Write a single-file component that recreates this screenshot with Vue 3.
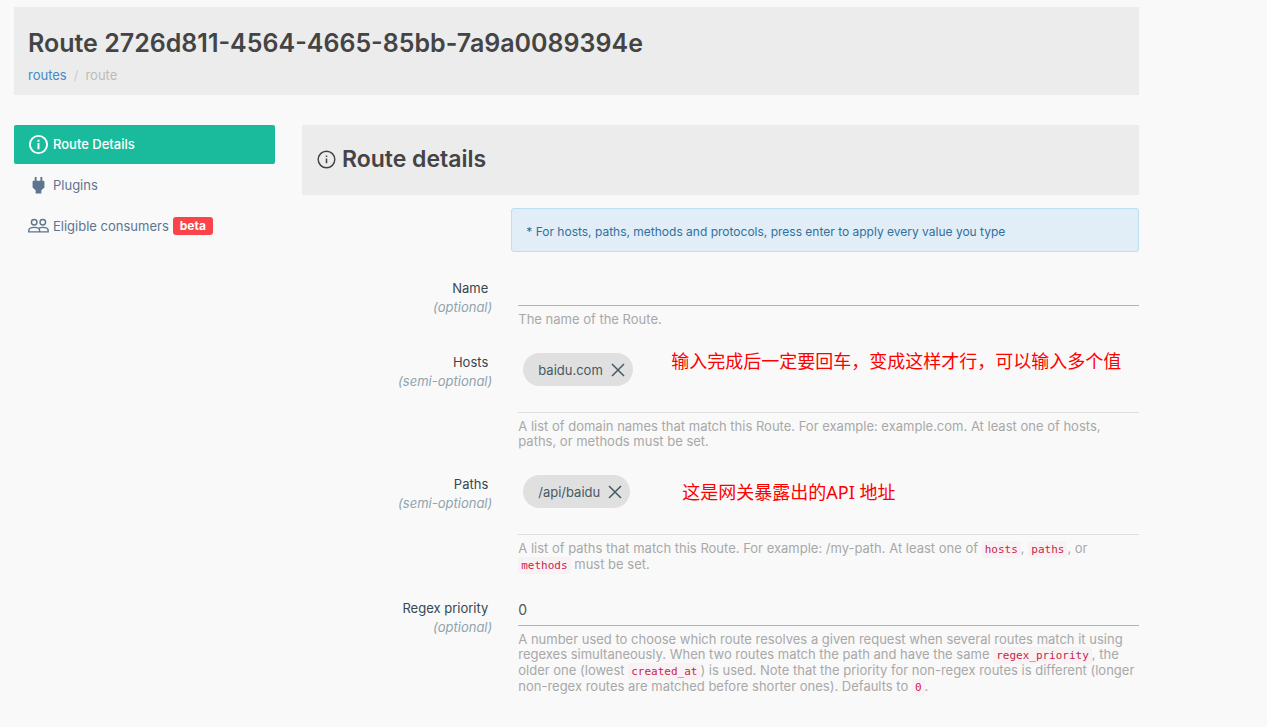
<script setup>
import { ref } from 'vue'

const routeId = '2726d811-4564-4665-85bb-7a9a0089394e'
const name = ref('')
const hosts = ref(['baidu.com'])
const paths = ref(['/api/baidu'])
const hostDraft = ref('')
const pathDraft = ref('')
const regexPriority = ref('0')

function add(list, draft) {
  const value = draft.trim()
  if (value) list.push(value)
}
function addHost() {
  add(hosts.value, hostDraft.value)
  hostDraft.value = ''
}
function addPath() {
  add(paths.value, pathDraft.value)
  pathDraft.value = ''
}
</script>

<template>
  <div class="page">
    <header class="page-header">
      <h1>Route {{ routeId }}</h1>
      <nav class="breadcrumb" aria-label="Breadcrumb">
        <a href="#/routes">routes</a><span class="slash">/</span><span class="current">route</span>
      </nav>
    </header>

    <div class="columns">
      <nav class="side" aria-label="Route sections">
        <a href="#details" class="side-link active">
          <svg class="icon" viewBox="0 0 22 22" aria-hidden="true">
            <circle cx="11" cy="11" r="9" fill="none" stroke="currentColor" stroke-width="2" />
            <path d="M10 9.500h2V16h-2zM10 6h2v2h-2z" fill="currentColor" />
          </svg>
          <span>Route Details</span>
        </a>
        <a href="#plugins" class="side-link">
          <svg class="icon" viewBox="0 0 22 22" aria-hidden="true">
            <path d="M7 2h2v4h4V2h2v4h1.500l.7.700v6.300L14 16v3.500H8V16l-3.200-3V6.700l.7-.7H7z" fill="currentColor" />
          </svg>
          <span>Plugins</span>
        </a>
        <a href="#consumers" class="side-link">
          <svg class="icon" viewBox="0 0 22 22" aria-hidden="true" fill="none" stroke="currentColor" stroke-width="1.500">
            <circle cx="6.500" cy="6.500" r="2.900" />
            <circle cx="15.500" cy="6.500" r="2.900" />
            <path d="M.9 16.600v-1.700c0-2 2.900-3 5.600-3s5.600 1 5.600 3v1.700zM12.100 16.600h9v-1.700c0-2-2.900-3-5.600-3-1.500 0-3 .3-4.100.9" />
          </svg>
          <span>Eligible consumers</span>
          <span class="badge">beta</span>
        </a>
      </nav>

      <main class="content">
        <div class="panel-head">
          <svg class="icon" viewBox="0 0 22 22" aria-hidden="true">
            <circle cx="11" cy="11" r="8.700" fill="none" stroke="currentColor" stroke-width="1.500" />
            <path d="M10.200 10h1.600v5h-1.600zM10.200 6.800h1.600v1.600h-1.600z" fill="currentColor" />
          </svg>
          <h2>Route details</h2>
        </div>

        <p class="alert">* For hosts, paths, methods and protocols, press enter to apply every value you type</p>

        <form @submit.prevent>
          <div class="row">
            <label for="name"><span class="label">Name</span><em>(optional)</em></label>
            <div class="field">
              <input id="name" v-model="name" type="text" class="text-input" />
              <p class="help">The name of the Route.</p>
            </div>
          </div>

          <div class="row">
            <label for="hosts"><span class="label">Hosts</span><em>(semi-optional)</em></label>
            <div class="field">
              <div class="chips">
                <span v-for="(host, i) in hosts" :key="host" class="chip">
                  {{ host }}
                  <button type="button" :aria-label="'Remove ' + host" @click="hosts.splice(i, 1)">
                    <svg viewBox="0 0 14 14" aria-hidden="true"><path d="M1 1l12 12M13 1L1 13" /></svg>
                  </button>
                </span>
                <input id="hosts" v-model="hostDraft" type="text" class="chip-input" @keydown.enter="addHost" />
                <span class="note host-note">输入完成后一定要回车，变成这样才行，可以输入多个值</span>
              </div>
              <p class="help">A list of domain names that match this Route. For example: example.com. At least one of hosts,<br />paths, or methods must be set.</p>
            </div>
          </div>

          <div class="row">
            <label for="paths"><span class="label">Paths</span><em>(semi-optional)</em></label>
            <div class="field">
              <div class="chips">
                <span v-for="(path, i) in paths" :key="path" class="chip">
                  {{ path }}
                  <button type="button" :aria-label="'Remove ' + path" @click="paths.splice(i, 1)">
                    <svg viewBox="0 0 14 14" aria-hidden="true"><path d="M1 1l12 12M13 1L1 13" /></svg>
                  </button>
                </span>
                <input id="paths" v-model="pathDraft" type="text" class="chip-input" @keydown.enter="addPath" />
                <span class="note path-note">这是网关暴露出的API 地址</span>
              </div>
              <p class="help">A list of paths that match this Route. For example: /my-path. At least one of <code>hosts</code>, <code>paths</code>, or<br /><code>methods</code> must be set.</p>
            </div>
          </div>

          <div class="row">
            <label for="regex"><span class="label">Regex priority</span><em>(optional)</em></label>
            <div class="field">
              <input id="regex" v-model="regexPriority" type="text" class="text-input" />
              <p class="help">A number used to choose which route resolves a given request when several routes match it using<br />regexes simultaneously. When two routes match the path and have the same <code>regex_priority</code>, the<br />older one (lowest <code>created_at</code>) is used. Note that the priority for non-regex routes is different (longer<br />non-regex routes are matched before shorter ones). Defaults to <code>0</code>.</p>
            </div>
          </div>

          <div class="row">
            <label for="methods"><span class="label">Methods</span><em>(semi-optional)</em></label>
            <div class="field">
              <div class="chips">
                <input id="methods" type="text" class="chip-input" />
              </div>
            </div>
          </div>
        </form>
      </main>
    </div>
  </div>
</template>

<style>
body {
  background: #f9f9f9;
}
</style>

<style scoped>
* {
  box-sizing: border-box;
}
.page {
  height: 100vh;
  overflow: hidden;
  padding: 7px 128px 0 14px;
  font-family: Inter, "Noto Sans", "Noto Sans CJK SC", sans-serif;
  font-size: 13px;
  color: #444;
}
h1,
h2,
p {
  margin: 0;
}
.page-header {
  padding: 20px 14px 12px;
  background: #ececec;
}
h1 {
  font-size: 25px;
  line-height: 32px;
  font-weight: 600;
}
.breadcrumb {
  margin-top: 8px;
  line-height: 16px;
}
.breadcrumb a {
  color: #428bca;
  text-decoration: none;
}
.slash {
  padding: 0 7px;
  color: #ccc;
}
.current {
  color: #bbb;
}
.columns {
  display: grid;
  grid-template-columns: 261fr 837fr;
  gap: 27px;
  margin-top: 30px;
}
.side {
  display: flex;
  flex-direction: column;
  gap: 2px;
}
.side-link {
  display: flex;
  align-items: center;
  gap: 4px;
  height: 39px;
  padding: 0 14px 1px;
  border-radius: 2px;
  color: #5d7590;
  text-decoration: none;
}
.side-link.active {
  background: #1abb9c;
  color: #fff;
  font-weight: 500;
}
.icon {
  flex: none;
  width: 21px;
  height: 21px;
}
.badge {
  padding: 0 7px;
  border-radius: 3px;
  background: #fb4449;
  color: #fff;
  font-size: 12px;
  line-height: 18px;
  font-weight: 700;
}
.panel-head {
  display: flex;
  align-items: center;
  gap: 5px;
  height: 70px;
  padding: 0 14px 2px;
  background: #ececec;
}
h2 {
  font-size: 23px;
  line-height: 28px;
  font-weight: 600;
}
.alert {
  margin: 13px 0 27px 25%;
  padding: 16px 14px 12px;
  border: 1px solid #bce0ee;
  border-radius: 3px;
  background: #e1edf7;
  color: #31709f;
  font-size: 12px;
  line-height: 14px;
}
.row {
  display: grid;
  grid-template-columns: 25% 1fr;
  margin-bottom: 25px;
}
.row:last-child {
  padding-top: 2px;
}
.row label {
  display: flex;
  flex-direction: column;
  align-items: flex-end;
  padding-right: 19px;
  line-height: 19px;
}
.label {
  padding-right: 4px;
  color: #37474f;
}
.row em {
  color: #90a4ae;
}
.field {
  min-width: 0;
  padding-left: 7px;
}
.text-input {
  display: block;
  width: 100%;
  height: 27px;
  padding: 0 0 6px;
  border: 0;
  border-bottom: 1px solid #b4b4b4;
  outline: 0;
  background: transparent;
  font: inherit;
  font-size: 14px;
  color: #555;
}
.help {
  padding: 6px 0 1px;
  line-height: 15px;
  color: #a8a8a8;
}
code {
  padding: 2px 3px;
  border-radius: 3px;
  background: #f9f2f4;
  color: #c7254e;
  font-family: "DejaVu Sans Mono", monospace;
  font-size: 11px;
}
.chips {
  position: relative;
  display: flex;
  align-items: flex-start;
  height: 60px;
  padding-left: 5px;
  border-bottom: 1px solid #ddd;
}
.chip {
  display: flex;
  align-items: center;
  gap: 8px;
  height: 33px;
  padding: 0 8px 0 15px;
  border-radius: 17px;
  background: #e0e0e0;
  color: #455a64;
}
.chip button {
  display: flex;
  padding: 0;
  border: 0;
  background: none;
  color: inherit;
}
.chip svg {
  width: 14px;
  height: 14px;
  stroke: currentColor;
  stroke-width: 1.5;
}
.chip-input {
  flex: 1;
  min-width: 0;
  height: 33px;
  border: 0;
  outline: 0;
  background: transparent;
  font: inherit;
}
.note {
  position: absolute;
  color: #f00;
  font-family: "Noto Sans", "Noto Sans CJK SC", sans-serif;
  font-size: 18px;
  line-height: 24px;
  white-space: nowrap;
  pointer-events: none;
}
.host-note {
  top: -4px;
  left: 153px;
}
.path-note {
  top: 5px;
  left: 164px;
}
</style>
